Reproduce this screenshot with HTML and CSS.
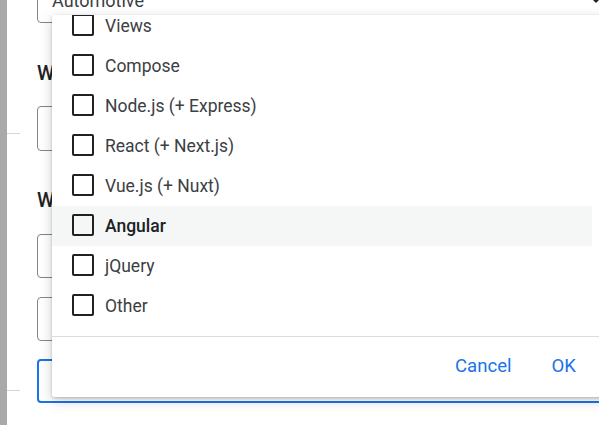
FILE: index.html
```html
<!DOCTYPE html>
<html lang="en">
<head>
<meta charset="utf-8">
<title>Frameworks</title>
<link rel="stylesheet" href="styles.css">
</head>
<body>
<div class="page">
  <div class="rail"></div>
  <div class="gutter">
    <div class="gutter-line line-a"></div>
    <div class="gutter-line line-b"></div>
  </div>
  <main class="form">
    <div class="field select">
      <span class="value">Automotive</span>
      <svg class="arrow" width="10" height="5" viewBox="0 0 10 5"><path d="M0 0h10L5 5z" fill="#202124"/></svg>
    </div>
    <h2 class="label label-first">What kind of app are you building?</h2>
    <div class="field"></div>
    <h2 class="label label-second">Which frameworks do you use?</h2>
    <div class="field short"></div>
    <div class="field short spaced"></div>
    <div class="field focused"></div>
  </main>
</div>

<div class="dialog" role="dialog">
  <div class="list-viewport">
    <ul class="list">
      <li class="item"><span class="box"></span><span>Views</span></li>
      <li class="item"><span class="box"></span><span>Compose</span></li>
      <li class="item"><span class="box"></span><span>Node.js (+ Express)</span></li>
      <li class="item"><span class="box"></span><span>React (+ Next.js)</span></li>
      <li class="item"><span class="box"></span><span>Vue.js (+ Nuxt)</span></li>
      <li class="item active"><span class="box"></span><span>Angular</span></li>
      <li class="item"><span class="box"></span><span>jQuery</span></li>
      <li class="item"><span class="box"></span><span>Other</span></li>
    </ul>
  </div>
  <div class="divider"></div>
  <div class="actions">
    <button class="btn">Cancel</button>
    <button class="btn">OK</button>
  </div>
</div>
</body>
</html>
```
FILE: styles.css
```css
html, body {
  margin: 0;
  height: 100%;
  overflow: hidden;
  background: #ffffff;
  font-family: Roboto, "Noto Sans", Arial, sans-serif;
}

.page {
  display: flex;
  height: 425px;
}

.rail {
  flex: none;
  width: 7px;
  background: #a9a9a9;
}

.gutter {
  flex: none;
  width: 13px;
  display: flex;
  flex-direction: column;
}

.gutter-line {
  height: 1px;
  background: #d6d6d6;
}

.line-a { margin-top: 133px; }
.line-b { margin-top: 256px; }

.form {
  flex: none;
  width: 590px;
  padding-left: 17px;
  margin-top: -22px;
  display: flex;
  flex-direction: column;
}

.field {
  box-sizing: border-box;
  height: 45px;
  border: 1px solid #80868b;
  border-radius: 4px;
  flex: none;
}

.select {
  display: flex;
  align-items: center;
  justify-content: space-between;
  padding: 0 25px 0 14px;
}

.value {
  font-size: 18px;
  color: #3c4043;
}

.label {
  margin: 38px 0 21px;
  font-size: 20px;
  line-height: 24px;
  font-weight: 500;
  color: #202124;
  white-space: nowrap;
}

.label-second {
  margin: 37px 0 22px;
}

.short { height: 44px; }
.spaced { margin-top: 19px; }

.focused {
  margin-top: 18px;
  height: 44px;
  border: 2px solid #1a73e8;
}

.dialog {
  position: absolute;
  left: 52px;
  top: 15px;
  width: 560px;
  height: 382px;
  background: #ffffff;
  border-radius: 2px;
  box-shadow: 0 4px 14px rgba(0, 0, 0, 0.18), 0 1px 3px rgba(0, 0, 0, 0.2);
  display: flex;
  flex-direction: column;
}

.list-viewport {
  flex: none;
  height: 321px;
  overflow: hidden;
}

.list {
  margin: -9px 20px 0 0;
  padding: 0;
  list-style: none;
}

.item {
  height: 40px;
  display: flex;
  align-items: center;
  gap: 11px;
  padding-left: 20px;
  font-size: 17.5px;
  color: #3c4043;
}

.item.active {
  background: #f5f7f6;
  font-weight: 500;
  color: #202124;
}

.box {
  flex: none;
  box-sizing: border-box;
  width: 22px;
  height: 22px;
  border: 2px solid #202124;
  border-radius: 2px;
  position: relative;
  top: -1px;
}

.divider {
  flex: none;
  height: 1px;
  background: #dadce0;
}

.actions {
  flex: 1;
  display: flex;
  justify-content: flex-end;
  align-items: center;
  gap: 40px;
  padding: 0 36px 3px 0;
}

.btn {
  background: none;
  border: 0;
  padding: 0;
  font-family: inherit;
  font-size: 18.6px;
  color: #1a73e8;
  cursor: pointer;
}
```
